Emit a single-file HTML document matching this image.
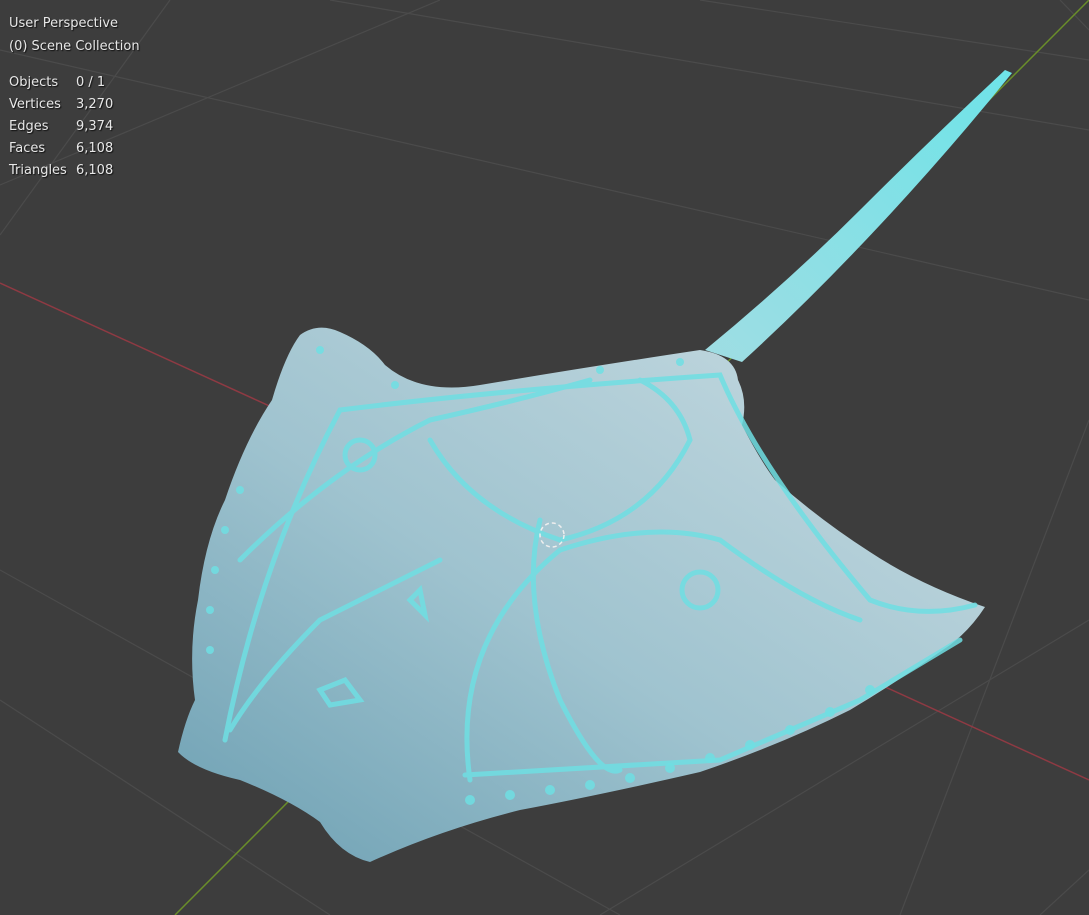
<!DOCTYPE html>
<html><head><style>
html,body{margin:0;padding:0;background:#3d3d3d;width:1089px;height:915px;overflow:hidden}
.t{position:absolute;font-family:"DejaVu Sans",sans-serif;font-size:13px;color:#e8e8e8;text-shadow:1px 1px 1px #111;white-space:nowrap}
</style></head><body>
<svg width="1089" height="915" style="position:absolute;left:0;top:0">
<rect width="1089" height="915" fill="#3d3d3d"/>
<g stroke="#4b4b4b" stroke-width="1.2" fill="none">
<line x1="0" y1="235" x2="170" y2="0"/>
<line x1="0" y1="50" x2="1089" y2="300"/>
<line x1="330" y1="0" x2="1089" y2="130"/>
<line x1="0" y1="570" x2="620" y2="915"/>
<line x1="0" y1="700" x2="330" y2="915"/>
<line x1="1089" y1="420" x2="900" y2="915"/>
<line x1="1060" y1="0" x2="1089" y2="30"/>
<line x1="600" y1="915" x2="1089" y2="620"/>
<line x1="440" y1="0" x2="0" y2="185"/>
<line x1="1089" y1="870" x2="1040" y2="915"/>
<line x1="700" y1="0" x2="1089" y2="60"/>
</g>
<line x1="0" y1="283" x2="1089" y2="780" stroke="#8e3a43" stroke-width="1.5"/>
<line x1="175" y1="915" x2="1089" y2="0" stroke="#6a8e2a" stroke-width="1.5"/>
<defs>
<linearGradient id="g" x1="0" y1="1" x2="1" y2="0">
<stop offset="0" stop-color="#6c9fb2"/><stop offset="0.45" stop-color="#9fc3cf"/><stop offset="1" stop-color="#c9dce2"/>
</linearGradient>
<linearGradient id="tl" x1="0" y1="1" x2="1" y2="0">
<stop offset="0" stop-color="#9fdde3"/><stop offset="1" stop-color="#6ee3e8"/>
</linearGradient>
</defs>
<path d="M705,350 Q790,280 860,210 Q930,140 1005,70 L1012,73 Q950,150 880,225 Q810,300 742,362 Z" fill="url(#tl)"/>
<path d="M300,335 Q318,322 340,332 Q370,345 385,365 Q420,395 480,385 Q600,365 700,350 Q735,355 738,380 Q748,400 742,425 Q760,460 775,480 Q820,520 870,552 Q920,585 985,607 Q970,630 950,645 Q900,680 850,710 Q780,745 700,772 Q600,795 520,810 Q440,830 370,862 Q340,855 320,822 Q290,800 240,780 Q195,770 178,752 Q185,720 195,700 Q188,650 198,600 Q205,540 225,500 Q245,440 272,400 Q285,355 300,335 Z" fill="url(#g)"/>
<g stroke="#6fdfe3" stroke-width="5" fill="none" stroke-linecap="round" opacity="0.85">
<path d="M225,740 Q260,560 340,410 Q500,390 720,375 Q760,470 870,600 Q920,620 975,605"/>
<path d="M470,780 Q450,640 560,550 Q650,520 720,540 Q800,600 860,620"/>
<path d="M240,560 Q330,470 430,420 Q520,400 590,380"/>
<path d="M540,520 Q520,600 560,700 Q600,780 620,770"/>
<path d="M430,440 Q470,510 560,540 Q650,520 690,440 Q680,400 640,380"/>
<path d="M465,775 L720,760 L860,700 L960,640"/>
<path d="M230,730 Q260,680 320,620 Q380,590 440,560"/>
<path d="M320,690 L345,680 L360,700 L330,705 Z"/>
<path d="M410,600 L420,590 L425,615 Z"/>
<circle cx="700" cy="590" r="18"/>
<circle cx="360" cy="455" r="15"/>
</g>
<g fill="#6fdfe3" opacity="0.85">
<circle cx="470" cy="800" r="5"/><circle cx="510" cy="795" r="5"/><circle cx="550" cy="790" r="5"/><circle cx="590" cy="785" r="5"/><circle cx="630" cy="778" r="5"/><circle cx="670" cy="768" r="5"/><circle cx="710" cy="758" r="5"/><circle cx="750" cy="745" r="5"/><circle cx="790" cy="730" r="5"/><circle cx="830" cy="712" r="5"/><circle cx="870" cy="690" r="5"/>
<circle cx="210" cy="610" r="4"/><circle cx="215" cy="570" r="4"/><circle cx="225" cy="530" r="4"/><circle cx="240" cy="490" r="4"/><circle cx="210" cy="650" r="4"/>
<circle cx="320" cy="350" r="4"/><circle cx="395" cy="385" r="4"/><circle cx="600" cy="370" r="4"/><circle cx="680" cy="362" r="4"/>
</g>
<circle cx="552" cy="535" r="12" stroke="#eee" stroke-width="1.5" fill="none" stroke-dasharray="4 3"/>
</svg>
<div class="t" style="left:9px;top:16px">User Perspective</div>
<div class="t" style="left:9px;top:39px">(0) Scene Collection</div>
<div class="t" style="left:9px;top:75px">Objects</div><div class="t" style="left:76px;top:75px">0 / 1</div>
<div class="t" style="left:9px;top:97px">Vertices</div><div class="t" style="left:76px;top:97px">3,270</div>
<div class="t" style="left:9px;top:119px">Edges</div><div class="t" style="left:76px;top:119px">9,374</div>
<div class="t" style="left:9px;top:141px">Faces</div><div class="t" style="left:76px;top:141px">6,108</div>
<div class="t" style="left:9px;top:163px">Triangles</div><div class="t" style="left:76px;top:163px">6,108</div>
</body></html>
